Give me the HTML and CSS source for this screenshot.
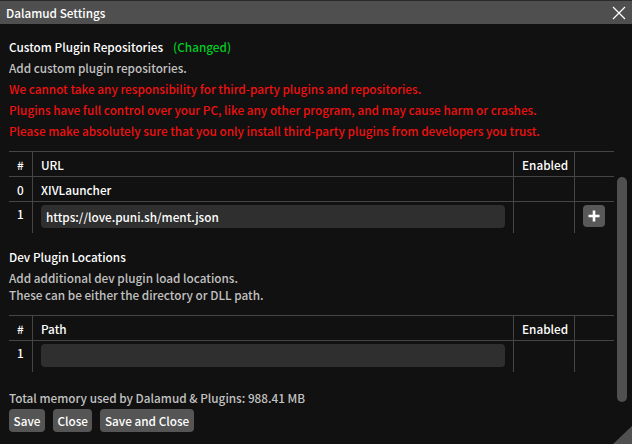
FILE: index.html
```html
<!DOCTYPE html>
<html lang="en">
<head>
<meta charset="utf-8">
<title>Dalamud Settings</title>
<link rel="stylesheet" href="styles.css">
</head>
<body>
<div class="window">
  <div class="titlebar">
    <span class="title">Dalamud Settings</span>
    <svg class="close" width="14" height="14" viewBox="0 0 14 14"><path d="M1 1 L13 13 M13 1 L1 13" stroke="#ffffff" stroke-width="1.2" fill="none"/></svg>
  </div>
  <div class="body">
    <div class="scroll">
      <section class="group">
        <div class="line heading">Custom Plugin Repositories<span class="changed">(Changed)</span></div>
        <div class="line desc">Add custom plugin repositories.</div>
        <div class="line warn">We cannot take any responsibility for third-party plugins and repositories.</div>
        <div class="line warn">Plugins have full control over your PC, like any other program, and may cause harm or crashes.</div>
        <div class="line warn">Please make absolutely sure that you only install third-party plugins from developers you trust.</div>
        <table class="tbl">
          <colgroup><col class="c-num"><col class="c-url"><col class="c-en"><col class="c-act"></colgroup>
          <thead>
            <tr><th>#</th><th class="vl">URL</th><th class="vl">Enabled</th><th class="vl"></th></tr>
          </thead>
          <tbody>
            <tr class="row-text"><td>0</td><td class="vl">XIVLauncher</td><td class="vl"></td><td class="vl"></td></tr>
            <tr class="row-input"><td>1</td><td class="vl"><div class="input">https://love.puni.sh/ment.json</div></td><td class="vl"></td><td class="vl"><div class="add"><svg width="12" height="12" viewBox="0 0 12 12"><path d="M6 0.5 V11.5 M0.5 6 H11.5" stroke="#ffffff" stroke-width="2.6" fill="none"/></svg></div></td></tr>
          </tbody>
        </table>
      </section>
      <section class="group second">
        <div class="line heading">Dev Plugin Locations</div>
        <div class="line desc">Add additional dev plugin load locations.</div>
        <div class="line desc tight">These can be either the directory or DLL path.</div>
        <table class="tbl">
          <colgroup><col class="c-num"><col class="c-url"><col class="c-en"><col class="c-act"></colgroup>
          <thead>
            <tr><th>#</th><th class="vl">Path</th><th class="vl">Enabled</th><th class="vl"></th></tr>
          </thead>
          <tbody>
            <tr class="row-input"><td>1</td><td class="vl"><div class="input"></div></td><td class="vl"></td><td class="vl"></td></tr>
          </tbody>
        </table>
      </section>
    </div>
    <footer class="footer">
      <div class="line desc mem">Total memory used by Dalamud &amp; Plugins: 988.41 MB</div>
      <div class="buttons">
        <button class="btn">Save</button>
        <button class="btn">Close</button>
        <button class="btn">Save and Close</button>
      </div>
    </footer>
    <div class="thumb"></div>
  </div>
  <div class="grip"></div>
</div>
</body>
</html>
```

FILE: styles.css
```css
* { box-sizing: border-box; }

html, body {
  margin: 0;
  padding: 0;
  background: #111111;
}

body {
  font-family: "Noto Sans CJK JP", "Noto Sans", sans-serif;
  font-weight: 500;
  font-size: 11.75px;
  line-height: 17px;
  color: #ffffff;
}

.window {
  position: relative;
  width: 632px;
  height: 444px;
  display: flex;
  flex-direction: column;
  background: #111111;
  overflow: hidden;
}

.titlebar {
  height: 24px;
  flex: none;
  display: flex;
  align-items: center;
  justify-content: space-between;
  background: #4f4f4f;
  border-top: 1px solid #2a2a2a;
  padding: 0 5px 0 6px;
}

.title {
  color: #ffffff;
}

.close {
  display: block;
  margin-right: 1px;
}

.body {
  position: relative;
  flex: 1;
  display: flex;
  flex-direction: column;
  min-height: 0;
}

.scroll {
  flex: 1;
  min-height: 0;
  overflow: hidden;
  padding: 14px 0 0 9px;
}

.group.second {
  margin-top: 15px;
}

.line {
  height: 17px;
  margin-bottom: 4px;
  white-space: nowrap;
}

.line.tight {
  margin-top: -4px;
}

.heading {
  color: #ffffff;
}

.changed {
  color: #00cc22;
  margin-left: 10px;
}

.desc {
  color: #c2c2c2;
}

.warn {
  color: #f01010;
}

.tbl {
  margin-top: 12px;
  width: 605px;
  border-collapse: separate;
  border-spacing: 0;
  table-layout: fixed;
}

.c-num { width: 23px; }
.c-url { width: 481px; }
.c-en { width: 61px; }
.c-act { width: 40px; }

.tbl th,
.tbl td {
  padding: 0 0 0 8px;
  text-align: left;
  font-weight: 500;
  white-space: nowrap;
}

.tbl th {
  height: 26px;
  border-top: 1px solid #454545;
  border-bottom: 1px solid #454545;
  vertical-align: middle;
  color: #ffffff;
}

.tbl .vl {
  border-left: 1px solid #454545;
}

.row-text td {
  height: 25px;
  border-bottom: 1px solid #454545;
  vertical-align: middle;
}

.row-input td {
  height: 31px;
  vertical-align: top;
  padding-top: 3px;
}

.input {
  width: 464px;
  height: 23px;
  background: #2f2f2f;
  border-radius: 4px;
  padding-left: 5px;
  line-height: 23px;
  color: #ffffff;
}

.add {
  width: 22px;
  height: 22px;
  background: #585858;
  border-radius: 4px;
  display: flex;
  align-items: center;
  justify-content: center;
}

.add svg {
  display: block;
}

.thumb {
  position: absolute;
  left: 617px;
  top: 153px;
  width: 10px;
  height: 225px;
  border-radius: 5px;
  background: #505050;
}

.footer {
  flex: none;
  padding: 0 9px 12px 9px;
}

.mem {
  margin-bottom: 3px;
}

.buttons {
  display: flex;
  gap: 8px;
}

.btn {
  height: 23px;
  padding: 0 4.5px;
  border: none;
  border-radius: 4px;
  background: #555555;
  color: #ffffff;
  font-family: inherit;
  font-weight: 500;
  font-size: 11.75px;
  line-height: 23px;
}

.grip {
  position: absolute;
  right: 0;
  bottom: 0;
  width: 19px;
  height: 18px;
  background: #505050;
  clip-path: polygon(100% 0, 100% 100%, 0 100%);
}
```
